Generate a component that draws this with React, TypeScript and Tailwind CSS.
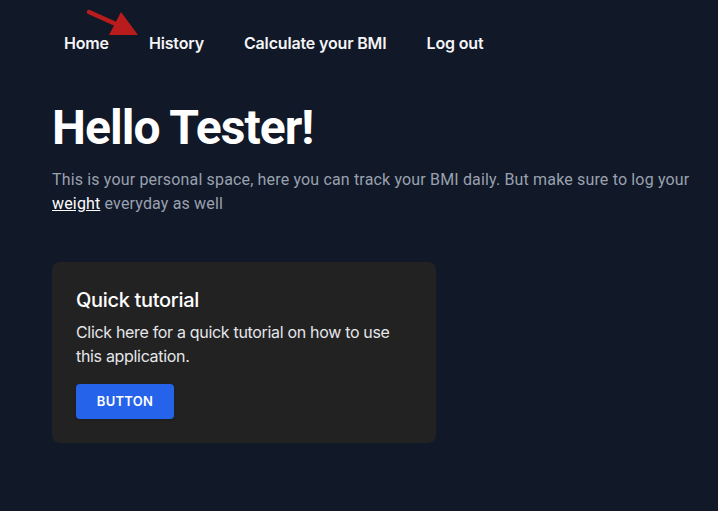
export default function App() {
  const links = ["Home", "History", "Calculate your BMI", "Log out"];

  return (
    <div
      className="relative min-h-[511px] bg-[#111827] text-white"
      style={{ fontFamily: "Inter, 'Noto Sans', sans-serif" }}
    >
      {/* annotation arrow */}
      <svg className="absolute left-0 top-0" width="160" height="40" viewBox="0 0 160 40">
        <line x1="89" y1="12" x2="118" y2="25" stroke="#b91c1c" strokeWidth="4.5" strokeLinecap="round" />
        <polygon points="109,35 121,12 138,35" fill="#b91c1c" />
      </svg>

      <nav className="flex gap-[40px] pl-[64px] pt-[32px] text-[16px] font-semibold tracking-[-0.01em] text-gray-100">
        {links.map((l) => (
          <a key={l} href="#" className="leading-[22px]">
            {l}
          </a>
        ))}
      </nav>

      <main className="pl-[52px] pr-[20px] pt-[46px]" style={{ fontFamily: "Roboto, 'Noto Sans', sans-serif" }}>
        <h1 className="text-[48px] font-bold leading-[56px] tracking-[-0.02em]">Hello Tester!</h1>
        <p className="mt-[12px] text-[16px] leading-[24px] tracking-[0.01em] text-gray-400">
          This is your personal space, here you can track your BMI daily. But make sure to log your{" "}
          <a href="#" className="text-white underline">
            weight
          </a>{" "}
          everyday as well
        </p>

        <div
          className="mt-[46px] w-[384px] rounded-lg bg-[#222222] p-[24px] tracking-[-0.02em]"
          style={{ fontFamily: "Inter, 'Noto Sans', sans-serif" }}
        >
          <h2 className="text-[20px] font-medium leading-[28px]">Quick tutorial</h2>
          <p className="mt-[6px] text-[16px] leading-[24px] text-gray-200">
            Click here for a quick tutorial on how to use this application.
          </p>
          <button className="mt-[16px] h-[35px] w-[98px] rounded bg-[#2563eb] text-[13px] font-semibold tracking-[0.02em] text-white shadow">
            BUTTON
          </button>
        </div>
      </main>
    </div>
  );
}
